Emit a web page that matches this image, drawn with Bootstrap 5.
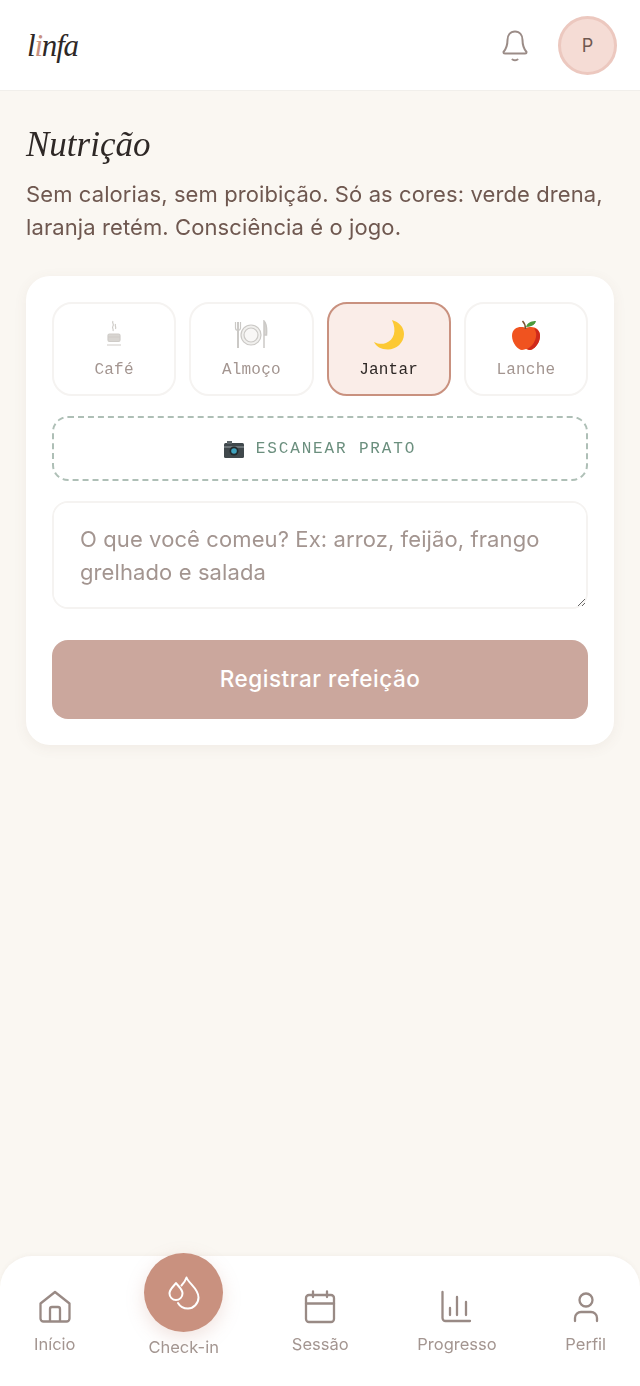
<!DOCTYPE html>
<html lang="pt-BR">
  <head>
    <meta charset="UTF-8" />
    <meta name="viewport" content="width=device-width, initial-scale=1.0" />
    <title>linfa - Nutrição</title>
    <link href="https://cdn.jsdelivr.net/npm/bootstrap@5.3.0/dist/css/bootstrap.min.css" rel="stylesheet" />
    <style>
      body {
        background: #faf7f2;
        font-family: "Inter", "Noto Sans", sans-serif;
        color: #6f5850;
        min-height: 1386px;
      }
      .app-top {
        height: 91px;
        background: #fff;
        border-bottom: 1px solid #f1efeb;
        padding: 0 23px 0 27px;
      }
      .brand-word {
        font-family: "Liberation Serif", serif;
        font-style: italic;
        font-size: 31px;
        line-height: 1;
        color: #2e2826;
        letter-spacing: -1.2px;
      }
      .brand-word span { color: #c9917f; }
      .top-actions { gap: 30px; }
      .top-actions svg { margin-top: 2px; }
      .avatar-dot {
        width: 59px;
        height: 59px;
        border-radius: 50%;
        background: #f5dcd5;
        border: 3px solid #ecc8bf;
        font-size: 18px;
        color: #6f5850;
      }
      .page-title {
        font-family: "Liberation Serif", serif;
        font-style: italic;
        font-weight: 400;
        font-size: 35px;
        line-height: 44px;
        color: #2e2826;
        margin: 32px 0 11px;
      }
      .page-lead {
        font-size: 22px;
        line-height: 33px;
        letter-spacing: .1px;
        margin: 0 0 32px;
      }
      .meal-card {
        background: #fff;
        border-radius: 24px;
        padding: 26px;
        box-shadow: 0 3px 14px rgba(120, 90, 70, .07);
      }
      .meal-tile {
        flex: 1 1 0;
        height: 94px;
        border: 2px solid #f5f3f1;
        border-radius: 20px;
        font-family: "Liberation Mono", "DejaVu Sans Mono", monospace;
        font-size: 16px;
        letter-spacing: .2px;
        color: #a39590;
        background: #fff;
        padding-top: 4px;
      }
      .meal-tile svg { height: 30px; width: 34px; }
      .meal-tile.is-on {
        background: #faede8;
        border-color: #c9917f;
        color: #2e2826;
      }
      .scan-box {
        height: 65px;
        margin-top: 20px;
        border: 2px dashed #aebfb6;
        border-radius: 16px;
        font-family: "Liberation Mono", "DejaVu Sans Mono", monospace;
        font-size: 16px;
        letter-spacing: 1.85px;
        color: #6b8f7e;
        background: #fff;
        gap: 12px;
      }
      .meal-text {
        height: 108px;
        margin-top: 20px;
        border: 2px solid #f5f3f1;
        border-radius: 16px;
        padding: 20px 26px;
        font-size: 22px;
        line-height: 33px;
        letter-spacing: .1px;
      }
      .meal-text::placeholder { color: #a39590; opacity: 1; }
      .save-btn {
        height: 79px;
        margin-top: 31px;
        padding-bottom: 8px;
        background: #cba79d;
        border: 0;
        border-radius: 16px;
        color: #fff;
        font-size: 22.5px;
        font-weight: 500;
        letter-spacing: .55px;
      }
      .save-btn:disabled { background: #cba79d; color: #fff; opacity: 1; }
      .page-body { padding: 0 26px; }
      .bottom-bar {
        height: 130px;
        background: #fff;
        border-radius: 32px 32px 0 0;
        box-shadow: 0 -1px 4px rgba(120, 90, 70, .05);
        padding: 32px 26px 0;
        font-size: 16.5px;
        color: #a39590;
      }
      .bar-item { padding: 0 8px; width: min-content; }
      .bar-item svg { width: 36px; height: 36px; margin-bottom: 8px; }
      .drop-btn {
        width: 79px;
        height: 79px;
        margin-top: -35px;
        margin-bottom: 3px;
        border-radius: 50%;
        background: #c9917f;
        box-shadow: 0 6px 18px rgba(201, 145, 127, .25);
      }
      .drop-btn svg { margin: 0; }
    </style>
  </head>
  <body class="d-flex flex-column">
    <!-- Top bar -->
    <header class="app-top d-flex align-items-center justify-content-between">
      <div class="brand-word">l<span>i</span>nfa</div>
      <div class="top-actions d-flex align-items-center">
        <svg width="26" height="32" viewBox="0 0 26 32" fill="none" stroke="#9b8c87" stroke-width="2" stroke-linecap="round" stroke-linejoin="round">
          <path d="M13 1.500c-5 0-7.500 4-7.500 8.500 0 6-1.500 9-4 12 0 1 .5 1.500 1.500 1.500h20c1 0 1.500-.5 1.500-1.500-2.500-3-4-6-4-12 0-4.500-2.500-8.500-7.500-8.500z" />
          <path d="M10.500 29.500c1.500 1 3.500 1 5 0" />
        </svg>
        <div class="avatar-dot d-flex align-items-center justify-content-center">P</div>
      </div>
    </header>

    <main class="page-body flex-grow-1">
      <h1 class="page-title">Nutrição</h1>
      <p class="page-lead">Sem calorias, sem proibição. Só as cores: verde drena, laranja retém. Consciência é o jogo.</p>

      <div class="meal-card">
        <!-- Meal type -->
        <div class="d-flex" style="gap: 13px">
          <div class="meal-tile d-flex flex-column align-items-center justify-content-center gap-2">
            <svg viewBox="0 0 34 30" fill="none" stroke="#cfccc8" stroke-width="1.200">
              <path d="M16 1c-1.500 2 1.500 3 0 5s1 3 0 5" />
              <path d="M18.500 4c-1 2 1 3 0 5" />
              <rect x="11" y="14" width="12" height="7.500" rx="1.500" fill="#d8d5d1" />
              <path d="M11 17h12M10 25h14" />
            </svg>
            Café
          </div>
          <div class="meal-tile d-flex flex-column align-items-center justify-content-center gap-2">
            <svg viewBox="0 0 34 30" fill="none" stroke="#cbc9c6" stroke-width="1.200">
              <circle cx="17" cy="15" r="10" fill="#f1f0ee" />
              <circle cx="17" cy="15" r="7" fill="#f8f7f6" />
              <path d="M4 2v26" stroke-width="2" />
              <path d="M1.500 2v6c0 3 5 3 5 0V2" />
              <path d="M30 28V1c2 2 3 7 2.500 14H30" fill="#d8d6d3" stroke-width="1.500" />
            </svg>
            Almoço
          </div>
          <div class="meal-tile is-on d-flex flex-column align-items-center justify-content-center gap-2">
            <svg viewBox="0 0 34 30">
              <path d="M20 0c7 2 12 7 12 14 0 9-8 15.500-16 15.500-7 0-12-3-14-7.500 4 2 8 2.500 12 1 8-3 11-12 6-23z" fill="#fcc934" />
            </svg>
            Jantar
          </div>
          <div class="meal-tile d-flex flex-column align-items-center justify-content-center gap-2">
            <svg viewBox="0 0 34 30">
              <path d="M17 8c-4-2-14-2-14 8 0 7 6 14 10 14 2 0 3-1 4-1s2 1 4 1c4 0 10-7 10-14 0-10-10-10-14-8z" fill="#f0531f" />
              <path d="M25 8.500c4 4 3 15-7 20.500 1 .5 2 1 3 1 4 0 10-7 10-14 0-4-2-7-6-7.500z" fill="#cf2a1c" />
              <path d="M16.500 9c0-3-1-6-3-8" stroke="#7a5230" stroke-width="1.500" fill="none" />
              <path d="M17 7c1-4 5-6 10-6-1 4-5 6-10 6z" fill="#4c9a3c" />
            </svg>
            Lanche
          </div>
        </div>

        <!-- Scan -->
        <div class="scan-box d-flex align-items-center justify-content-center">
          <svg width="20" height="18" viewBox="0 0 20 18">
            <rect x="0" y="3" width="20" height="15" rx="1.500" fill="#40484c" />
            <rect x="3" y="1" width="5" height="3" fill="#5d6569" />
            <rect x="0" y="6" width="20" height="2" fill="#6d7579" />
            <circle cx="10" cy="11" r="4.500" fill="#22292c" />
            <circle cx="10" cy="11" r="2.800" fill="#3fa2bd" />
          </svg>
          ESCANEAR PRATO
        </div>

        <textarea class="form-control meal-text d-block w-100" placeholder="O que você comeu? Ex: arroz, feijão, frango grelhado e salada"></textarea>

        <button class="btn save-btn w-100" disabled>Registrar refeição</button>
      </div>
    </main>

    <!-- Bottom nav -->
    <nav class="bottom-bar d-flex justify-content-between align-items-start">
      <div class="bar-item d-flex flex-column align-items-center">
        <svg viewBox="0 0 36 36" fill="none" stroke="#998a85" stroke-width="2.300" stroke-linejoin="round">
          <path d="M3.500 15.500 18 4l14.500 11.500v15a3 3 0 0 1-3 3h-23a3 3 0 0 1-3-3z" />
          <path d="M13 33.500V21a2 2 0 0 1 2-2h6a2 2 0 0 1 2 2v12.500" />
        </svg>
        Início
      </div>
      <div class="bar-item d-flex flex-column align-items-center">
        <div class="drop-btn d-flex align-items-center justify-content-center">
          <svg viewBox="1 0 36 36" fill="none" stroke="#fff" stroke-width="2" stroke-linejoin="round" stroke-linecap="round">
            <path d="M11 8c2 3 6.500 6 6.500 10.500a6.500 6.500 0 0 1-13 0C4.500 14 9 11 11 8z" />
            <path d="M16.500 10.500c2-2 4-5 5-8 2 6 12 11 12 20 0 6-5 11-10.500 11-4 0-8-2-10-5.500" />
          </svg>
        </div>
        Check-in
      </div>
      <div class="bar-item d-flex flex-column align-items-center">
        <svg viewBox="0 0 36 36" fill="none" stroke="#998a85" stroke-width="2.300" stroke-linecap="round">
          <rect x="4" y="7" width="28" height="27" rx="3" />
          <path d="M4 15.500h28M11 3.500V9M25 3.500V9" />
        </svg>
        Sessão
      </div>
      <div class="bar-item d-flex flex-column align-items-center">
        <svg viewBox="0 0 36 36" fill="none" stroke="#998a85" stroke-width="2.300" stroke-linecap="round">
          <path d="M3.500 4v26a3 3 0 0 0 3 3H31" />
          <path d="M11 20v7M18 9v18M27 14v13" />
        </svg>
        Progresso
      </div>
      <div class="bar-item d-flex flex-column align-items-center">
        <svg viewBox="0 0 36 36" fill="none" stroke="#998a85" stroke-width="2.300" stroke-linecap="round">
          <circle cx="18" cy="12" r="6.500" />
          <path d="M7 33v-3c0-3.500 3-6 6-6h10c3 0 6 2.500 6 6v3" />
        </svg>
        Perfil
      </div>
    </nav>

    <script src="https://cdn.jsdelivr.net/npm/bootstrap@5.3.0/dist/js/bootstrap.bundle.min.js"></script>
  </body>
</html>
